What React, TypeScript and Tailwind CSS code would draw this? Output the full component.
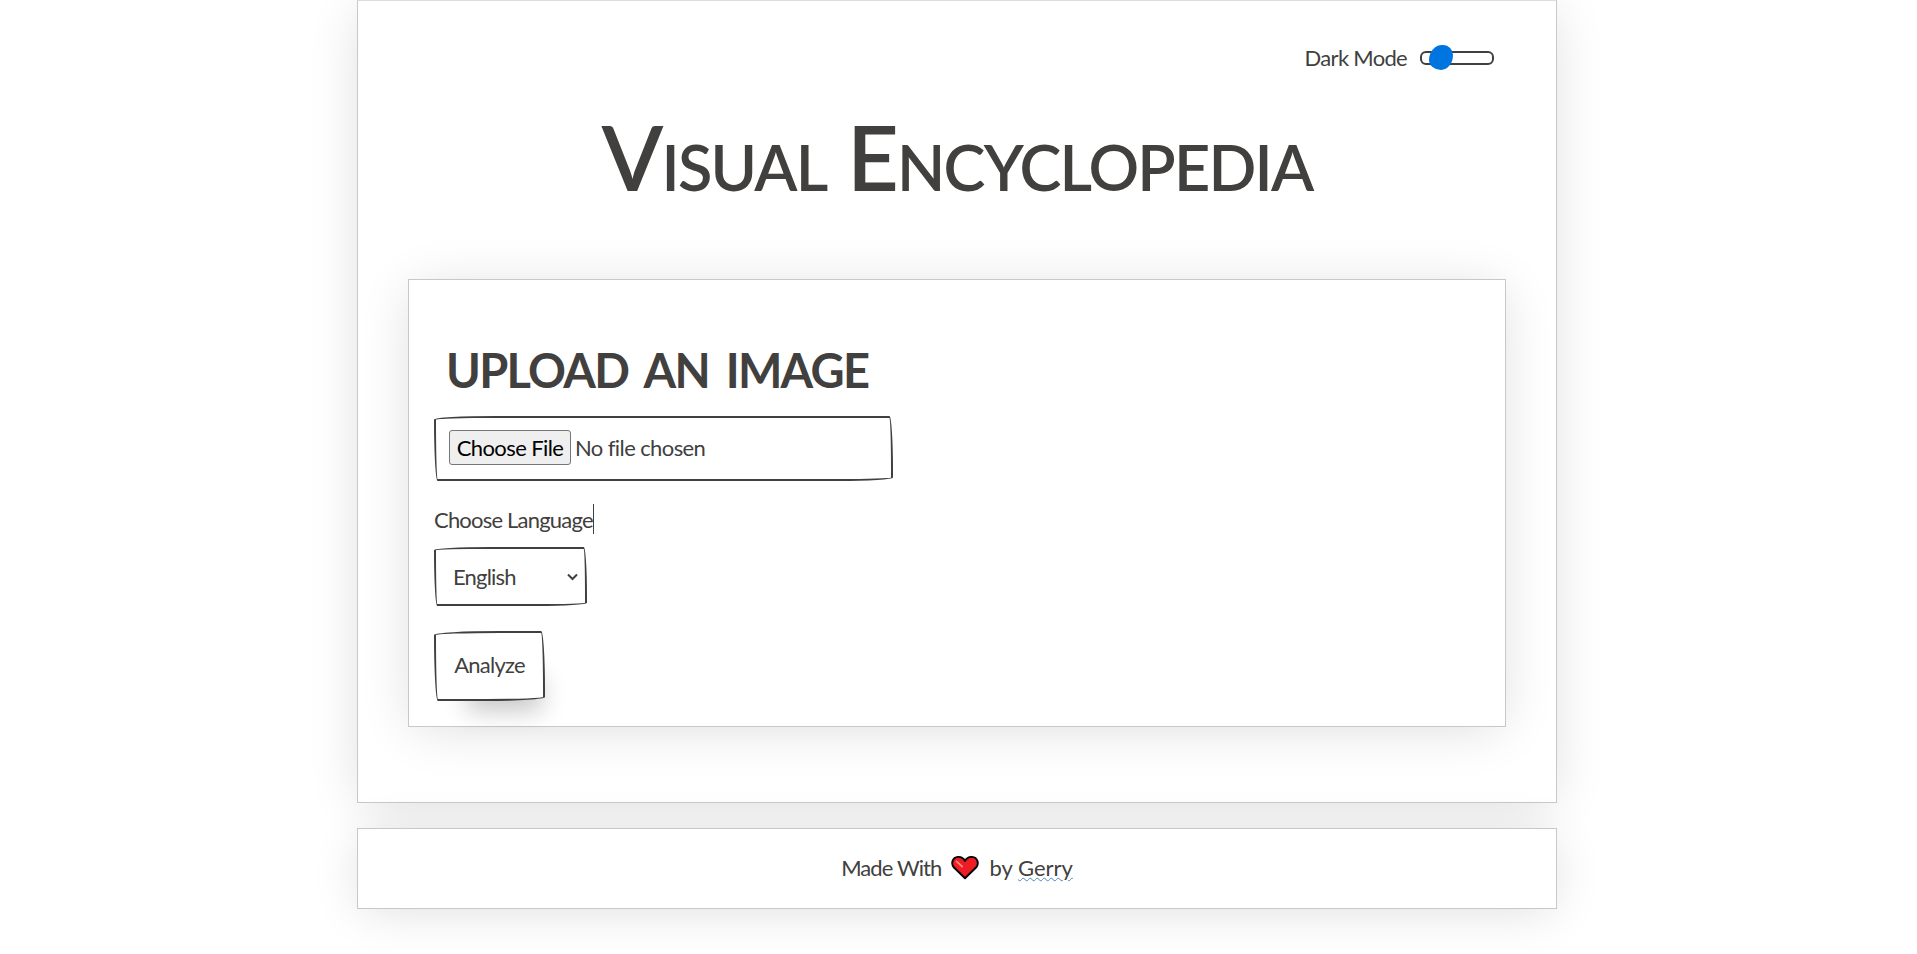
const wobbly = "rounded-[255px_15px_225px_15px/15px_225px_15px_255px] border-2 border-[#41403e]";
const softShadow = "shadow-[0_5px_50px_-5px_rgba(0,0,0,0.14)]";

export default function App() {
  return (
    <div className="min-h-[954px] bg-white font-['Lato',sans-serif] text-[#41403e]">
      <div className="ml-[357px] w-[1200px] pb-[46px]">
        <main className={`h-[803px] border border-[#c8c8c8] border-t-[#dcdcdc] bg-white px-[50px] pt-[39px] ${softShadow}`}>
          <div className="flex items-center justify-end pr-[12px] text-[22px] leading-[36px] tracking-[-0.7px]">
            <span>Dark Mode</span>
            <span className="relative ml-[13px] h-[14px] w-[74px] rounded-[6px] border-2 border-[#41403e]">
              <span className="absolute left-[7px] top-[-8px] h-[25px] w-[24px] rounded-[55%_40%_50%_50%/60%_40%_60%_40%] bg-[#0075e0]" />
            </span>
          </div>
          <h1 className="mt-[25px] text-center text-[90px] font-semibold leading-[110px] tracking-[-1.8px] [font-variant:small-caps]">
            Visual Encyclopedia
          </h1>
          <section className={`mt-[68px] h-[448px] border border-[#c8c8c8] bg-white px-[25px] ${softShadow}`}>
            <h2 className="ml-[12px] pt-[54px] text-[47px] font-bold leading-[72px] tracking-[-1.7px] uppercase [word-spacing:7px]">Upload an image</h2>
            <div className={`mt-[10px] h-[65px] w-[459px] px-[13px] py-[12px] ${wobbly}`}>
              <input type="file" className="text-[22px] leading-[34px] tracking-[-0.6px] file:mr-[4px] file:h-[35px] file:w-[122px] file:rounded-[3px] file:border file:border-[#767676] file:bg-[#efefef] file:text-black" />
            </div>
            <label className="mt-[17px] block text-[22px] leading-[36px] tracking-[-0.8px]">Choose Language<span className="inline-block h-[30px] w-px translate-y-[6px] bg-[#41403e]" /></label>
            <div className="relative mt-[9px] w-[153px]">
              <select className={`block h-[59px] w-full appearance-none bg-white pl-[17px] text-[22px] tracking-[-0.8px] ${wobbly}`}>
                <option>English</option>
              </select>
              <svg className="absolute left-[133px] top-[26px]" width="11" height="8" viewBox="0 0 11 8" fill="none" aria-hidden="true">
                <path d="M1 1.500 5.500 6 10 1.500" stroke="#41403e" strokeWidth="2" />
              </svg>
            </div>
            <button className={`mt-[25px] block h-[70px] w-[111px] bg-white pb-[4px] text-[22px] tracking-[-0.75px] shadow-[15px_28px_25px_-18px_rgba(0,0,0,0.22)] ${wobbly}`}>Analyze</button>
          </section>
        </main>
        <footer className={`mt-[25px] flex h-[81px] items-center justify-center gap-[10px] border border-[#c8c8c8] bg-white pb-[2px] text-[22px] ${softShadow}`}>
          <span className="tracking-[-0.9px]">Made With</span>
          <svg width="28" height="25" viewBox="0 0 30 26" aria-hidden="true">
            <path d="M15 24.500 3.200 13C-.5 9 1.500 2 7.500 1.600 11 1.400 13.600 3.200 15 6c1.400-2.800 4-4.600 7.500-4.400 6 .4 8 7.400 4.300 11.400Z" fill="#ee1c25" stroke="#000" strokeWidth="2" strokeLinejoin="round" />
            <path d="M6 6.500 12 12" stroke="#f58a80" strokeWidth="2" strokeLinecap="round" />
          </svg>
          <span>by <a className="underline decoration-[#4a86c8] decoration-wavy decoration-1">Gerry</a></span>
        </footer>
      </div>
    </div>
  );
}
